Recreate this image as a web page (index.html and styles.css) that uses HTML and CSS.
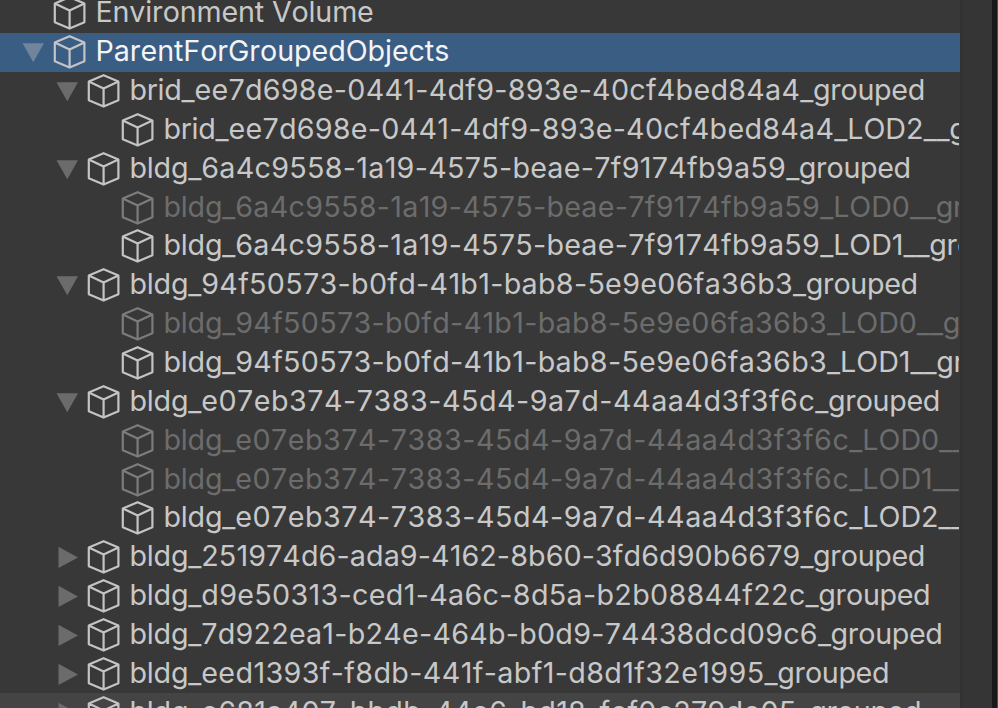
FILE: index.html
```html
<!DOCTYPE html>
<html lang="en"><head><meta charset="utf-8"><title>Hierarchy</title><link rel="stylesheet" href="styles.css"></head>
<body>
<svg class="defs" width="0" height="0"><symbol id="cube" viewBox="0 0 34 36"><path d="M17.6 2.2 32.4 8.4V27.2L17.6 33.6 2.8 27.2V8.4ZM2.8 8.4 17.6 15.6 32.4 8.4M17.6 15.6V33.4"/></symbol></svg>
<main class="panel"><div class="tree" id="tree"></div><div class="scrollbar"></div><div class="edge"></div></main>
<script src="tree.js"></script>
</body></html>
```
FILE: styles.css
```css
body { margin: 0; background: #383838; overflow: hidden; }
.defs { display: block; }
.panel { display: flex; width: 998px; height: 708px; overflow: hidden; }
.tree { width: 960px; overflow: hidden; flex: none; }
.scrollbar { width: 32px; background: #353535; border-left: 2px solid #323232; box-sizing: border-box; }
.edge { width: 5px; background: #191919; border-right: 1px solid #3d4f70; }
.row { display: flex; align-items: center; height: 38.85px; color: #c8c8c8; font: 28.7px/38px Inter, sans-serif; font-kerning: none; font-feature-settings: "calt" 0; white-space: nowrap; }
.row:first-child { margin-top: -6px; }
.label { width: 960px; overflow: hidden; margin: -2px 1px 0 0; padding-left: .5px; letter-spacing: -.08px; }
.row:first-child .label { letter-spacing: -.17px; }
.prefix { letter-spacing: -.2px; }
.suffix { letter-spacing: -.35px; }
.lod { letter-spacing: -.05px; }
.arrow { width: 22px; height: 22px; margin-right: 8px; fill: #6b6b6b; flex: none; }
.cube { width: 34px; height: 36px; margin: 0 9px 0 0; fill: none; stroke: #c4c4c4; stroke-width: 2.2; stroke-linejoin: round; flex: none; }
.d0 { padding-left: 22px; }
.d1 { padding-left: 56px; }
.d2 { padding-left: 90px; }
.selected { background: #3a5d84; color: #f4f4f4; }
.selected .arrow { fill: #70859b; }
.inactive { color: #6c6c6c; }
.inactive .cube { stroke: #7c7c7c; }
.hover { background: #444; }
```
FILE: tree.js
```js
// Identifier of each object and the tracking its digits are set with, in px.
const brid = ["brid_", "ee7d698e-0441-4df9-893e-40cf4bed84a4", 0.26];
const b6a4 = ["bldg_", "6a4c9558-1a19-4575-beae-7f9174fb9a59", 0.29];
const b94f = ["bldg_", "94f50573-b0fd-41b1-bab8-5e9e06fa36b3", 0.3];
const be07 = ["bldg_", "e07eb374-7383-45d4-9a7d-44aa4d3f3f6c", 0.5];
const rows = [
  [0, "", "Environment Volume", "", ""],
  [0, "open", "ParentForGroupedObjects", "", "selected"],
  [1, "open", brid, "", ""],
  [2, "", brid, "_LOD2_", ""],
  [1, "open", b6a4, "", ""],
  [2, "", b6a4, "_LOD0_", "inactive"],
  [2, "", b6a4, "_LOD1_", ""],
  [1, "open", b94f, "", ""],
  [2, "", b94f, "_LOD0_", "inactive"],
  [2, "", b94f, "_LOD1_", ""],
  [1, "open", be07, "", ""],
  [2, "", be07, "_LOD0_", "inactive"],
  [2, "", be07, "_LOD1_", "inactive"],
  [2, "", be07, "_LOD2_", ""],
  [1, "closed", ["bldg_", "251974d6-ada9-4162-8b60-3fd6d90b6679", 0.09], "", ""],
  [1, "closed", ["bldg_", "d9e50313-ced1-4a6c-8d5a-b2b08844f22c", 0.32], "", ""],
  [1, "closed", ["bldg_", "7d922ea1-b24e-464b-b0d9-74438dcd09c6", 0.24], "", ""],
  [1, "closed", ["bldg_", "eed1393f-f8db-441f-abf1-d8d1f32e1995", 0.37], "", ""],
  [1, "closed", ["bldg_", "e681a407-bbdb-44e6-bd18-fef0c279de05", 0.26], "", "hover"]
];
const arrows = { open: "M.5 2.2H22L11.3 21.3Z", closed: "M2.5 .8 22 11.5 2.5 22Z", "": "" };
const label = (t, lod) => typeof t === "string" ? t :
  `<span class="prefix">${t[0]}</span><span style="letter-spacing:${t[2]}px">${t[1]}</span><span class="lod">${lod}</span><span class="suffix">_grouped</span>`;
document.getElementById("tree").innerHTML = rows.map(([d, a, t, lod, c]) =>
  `<div class="row d${d} ${c}"><svg class="arrow" viewBox="0 0 22 22"><path d="${arrows[a]}"/></svg><svg class="cube"><use href="#cube"/></svg><span class="label">${label(t, lod)}</span></div>`).join("");
```
